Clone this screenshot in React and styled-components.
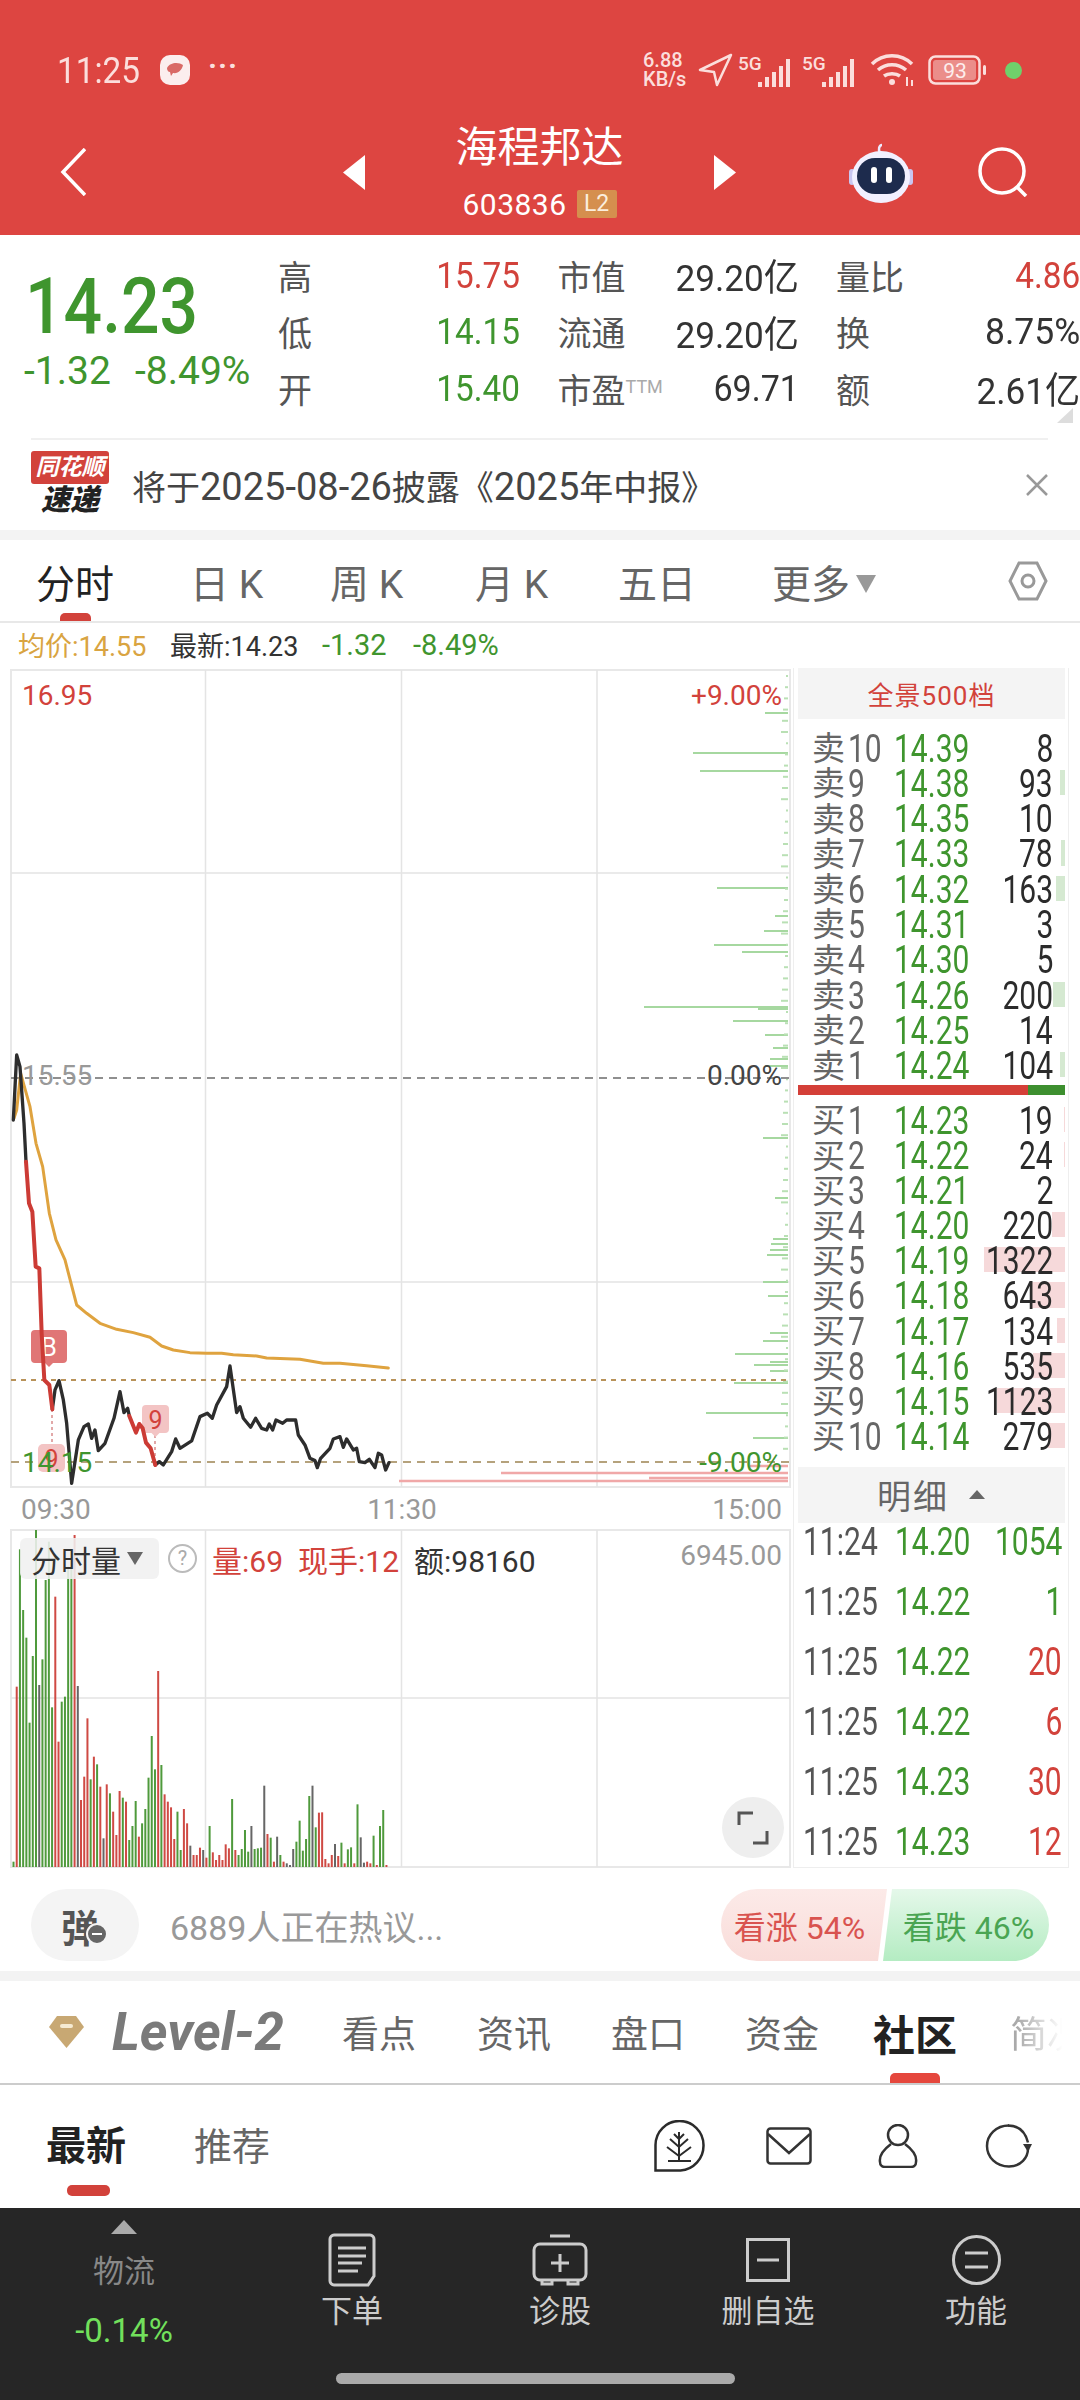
import React from 'react';
import styled, { createGlobalStyle } from 'styled-components';

const RED = '#d2423b';
const GREEN = '#3f952e';
const HEAD = '#dd4541';

const GlobalStyle = createGlobalStyle`
  html, body { margin: 0; padding: 0; background: #fff; }
  * { box-sizing: border-box; }
  body { font-family: Roboto, "Noto Sans CJK SC", sans-serif; }
`;

const Page = styled.div`
  width: 1080px;
  height: 2400px;
  overflow: hidden;
  display: flex;
  flex-direction: column;
  background: #fff;
  font-family: Roboto, "Noto Sans CJK SC", sans-serif;
`;

// digits in the app are narrower than Roboto, so squeeze them
const Num = styled.span`
  display: inline-block;
  white-space: nowrap;
  transform: scaleX(${p => p.$sx ?? 0.79});
  transform-origin: ${p => p.$origin || 'left'} center;
`;

/* ---------- header ---------- */
const Header = styled.header`
  height: 235px;
  background: ${HEAD};
  padding-top: 50px;
  color: #fff;
`;
const StatusBar = styled.div`
  height: 40px;
  display: flex;
  align-items: center;
  justify-content: space-between;
  padding: 0 58px 0 57px;
  color: #fbdedc;
`;
const StatusGroup = styled.div`
  display: flex;
  align-items: center;
`;
const Clock = styled.div`
  font-size: 37px;
  width: 103px;
`;
const AppDot = styled.div`
  width: 30px;
  height: 30px;
  border-radius: 10px;
  background: #fbeeee;
  display: flex;
  align-items: center;
  justify-content: center;
`;
const Dots = styled.div`
  margin-left: 18px;
  font-size: 30px;
  font-weight: 700;
  letter-spacing: 1px;
  line-height: 20px;
  padding-bottom: 8px;
`;
const Speed = styled.div`
  width: 47px;
  font-size: 20px;
  line-height: 19px;
  font-weight: 500;
  white-space: nowrap;
`;
const Slot = styled.div`
  margin-left: ${p => p.$ml}px;
  display: flex;
`;
const GreenDot = styled.div`
  margin-left: 18px;
  width: 17px;
  height: 17px;
  border-radius: 50%;
  background: #6fd06b;
`;
const Nav = styled.div`
  height: 114px;
  margin-top: 25px;
  display: flex;
  align-items: center;
  padding-left: 60px;
`;
const TitleBlock = styled.div`
  width: 349px;
  height: 114px;
  display: flex;
  flex-direction: column;
  align-items: center;
`;
const Title = styled.div`
  margin-top: 8px;
  font-size: 42px;
  line-height: 50px;
`;
const CodeRow = styled.div`
  margin-top: 14px;
  height: 34px;
  display: flex;
  align-items: center;
  gap: 10px;
`;
const Code = styled.span`
  font-size: 30px;
  letter-spacing: 0.5px;
`;
const Badge = styled.span`
  width: 40px;
  height: 28px;
  background: #d58f4e;
  border-radius: 2px;
  font-size: 23px;
  line-height: 28px;
  text-align: center;
  color: #fbeedd;
`;

/* ---------- quote ---------- */
const Quote = styled.section`
  position: relative;
  height: 203px;
  display: flex;
  padding-top: 12px;
`;
const PriceBlock = styled.div`
  width: 278px;
  padding-left: 24px;
`;
const BigPrice = styled.div`
  color: ${GREEN};
  font-size: 78px;
  font-weight: 500;
  line-height: 96px;
  margin-top: 12px;
  padding-left: 1px;
`;
const ChangeRow = styled.div`
  margin-top: -4px;
  display: flex;
  color: ${GREEN};
  font-size: 39px;
  line-height: 40px;
`;
const ChangeItem = styled.span`
  width: ${p => p.$w}px;
`;
const StatGrid = styled.div`
  display: grid;
  grid-template-columns: 242px 241px 244px;
  column-gap: 37.5px;
  grid-auto-rows: 56.5px;
  width: 802px;
`;
const Stat = styled.div`
  display: flex;
  align-items: center;
  justify-content: space-between;
`;
const StatLabel = styled.span`
  font-size: 34px;
  color: #555;
  white-space: nowrap;
`;
const Sup = styled.sup`
  font-size: 18px;
  color: #aaa;
  line-height: 0;
  vertical-align: 10px;
`;
const StatValue = styled.span`
  font-size: 37px;
  color: ${p => p.$c || '#333'};
  white-space: nowrap;
`;
const CornerMark = styled.div`
  position: absolute;
  right: 7px;
  bottom: 15px;
  width: 16px;
  height: 15px;
  background: #ddd;
  clip-path: polygon(100% 0, 100% 100%, 0 100%);
`;

const Notice = styled.section`
  height: 92px;
  margin: 0 32px 0 31px;
  border-top: 2px solid #f0f0f0;
  display: flex;
  align-items: center;
`;
const LogoBox = styled.div`
  width: 78px;
  height: 64px;
  display: flex;
  flex-direction: column;
  align-items: center;
  margin-top: -4px;
`;
const LogoTop = styled.div`
  width: 78px;
  height: 33px;
  border-radius: 3px;
  background: ${RED};
  color: #fff;
  font-size: 23px;
  font-weight: 700;
  font-style: italic;
  line-height: 33px;
  text-align: center;
  white-space: nowrap;
`;
const LogoBottom = styled.div`
  font-size: 29px;
  font-weight: 900;
  font-style: italic;
  line-height: 32px;
  color: #222;
`;
const NoticeText = styled.div`
  margin-left: 23px;
  flex: 1;
  font-size: 34px;
  color: #444;
  white-space: nowrap;
`;
const NoticeNum = styled.span`
  font-size: 38px;
`;
const Strip = styled.div`
  height: 10px;
  background: #f3f3f3;
`;

const ChartTabs = styled.nav`
  position: relative;
  height: 83px;
  border-bottom: 2px solid #e8e8e8;
  display: flex;
  align-items: center;
  padding-left: 36px;
`;
const ChartTab = styled.div`
  width: ${p => p.$w}px;
  font-size: 39px;
  color: ${p => (p.$active ? '#222' : '#666')};
  white-space: nowrap;
  display: flex;
  align-items: center;
  gap: 4px;
`;
const Caret = styled.span`
  width: 0;
  height: 0;
  border-left: 10px solid transparent;
  border-right: 10px solid transparent;
  border-top: 18px solid #999;
  margin-left: 2px;
  margin-top: 6px;
`;
const ActiveMark = styled.div`
  position: absolute;
  height: ${p => p.$h}px;
  width: ${p => p.$w}px;
  left: ${p => p.$x}px;
  bottom: 0;
  background: ${p => p.$c || RED};
  border-radius: 5px 5px 0 0;
`;
const HexSlot = styled.div`
  position: absolute;
  right: 32px;
  top: 21px;
`;

const Legend = styled.div`
  height: 37px;
  display: flex;
  align-items: center;
  padding: 6px 0 0 18px;
  font-size: 27px;
`;
const LegendItem = styled.span`
  width: ${p => p.$w}px;
  color: ${p => p.$c};
  font-size: ${p => p.$fs || 27}px;
  white-space: nowrap;
`;

/* ---------- market area ---------- */
const Market = styled.section`
  height: 1208px;
  display: flex;
`;
const ChartColumn = styled.div`
  position: relative;
  width: 793px;
  height: 1208px;
`;
const ChartSvg = styled.svg`
  display: block;
`;
const AxisText = styled.text`
  font-family: Roboto, sans-serif;
  font-size: 28px;
  fill: ${p => p.$c || '#999'};
  text-anchor: ${p => p.$a || 'start'};
`;
const FlagText = styled.text`
  font-family: Roboto, sans-serif;
  font-size: 25px;
  fill: ${p => p.$c};
  text-anchor: middle;
`;
const VolBar = styled.div`
  position: absolute;
  left: 20px;
  top: 878px;
  height: 41px;
  display: flex;
  align-items: center;
  font-size: 29px;
`;
const VolPick = styled.div`
  width: 139px;
  height: 41px;
  border-radius: 6px;
  background: rgba(240, 240, 240, 0.88);
  color: #333;
  display: flex;
  align-items: center;
  padding-left: 11px;
  gap: 6px;
  white-space: nowrap;
  font-size: 30px;
`;
const VolCaret = styled.span`
  width: 0;
  height: 0;
  border-left: 8px solid transparent;
  border-right: 8px solid transparent;
  border-top: 13px solid #666;
`;
const Help = styled.div`
  margin-left: 9px;
  width: 29px;
  height: 29px;
  border-radius: 50%;
  border: 2px solid #bbb;
  color: #aaa;
  font-size: 20px;
  text-align: center;
  line-height: 25px;
`;
const VolStat = styled.span`
  margin-left: ${p => p.$ml}px;
  width: ${p => p.$w}px;
  color: ${p => p.$c};
  white-space: nowrap;
  font-size: 30px;
`;
const ExpandBtn = styled.div`
  position: absolute;
  left: 722px;
  top: 1137px;
  width: 62px;
  height: 61px;
  border-radius: 50%;
  background: #eee;
  display: flex;
  align-items: center;
  justify-content: center;
`;

const Book = styled.aside`
  width: 276px;
  height: 1200px;
  margin-top: 8px;
  border: 1px solid #eee;
  border-top: none;
  padding: 0 3px 0 4px;
  display: flex;
  flex-direction: column;
`;
const BookHead = styled.div`
  height: 51px;
  flex: none;
  background: #f4f4f4;
  color: ${RED};
  font-size: 26px;
  letter-spacing: 1px;
  display: flex;
  align-items: center;
  justify-content: center;
`;
const Rows = styled.div`
  margin-top: ${p => p.$top}px;
  display: flex;
  flex-direction: column;
`;
const Row = styled.div`
  position: relative;
  height: ${p => p.$h}px;
  display: grid;
  grid-template-columns: 82px 88px 1fr;
  align-items: center;
  padding: 0 12px 0 14px;
  font-size: 38px;
  line-height: 1;
`;
const DepthFill = styled.div`
  position: absolute;
  right: 0;
  top: 5px;
  bottom: 5px;
  background: ${p => (p.$buy ? '#f6d9da' : '#d5e9d1')};
`;
const RowLabel = styled.span`
  position: relative;
  color: #666;
  display: flex;
  align-items: center;
  white-space: nowrap;
  font-size: 33px;
`;
const RowDigit = styled(Num)`
  font-size: 38px;
  margin-left: 3px;
`;
const RowPrice = styled(Num)`
  position: relative;
  color: ${GREEN};
`;
const RowQty = styled.span`
  position: relative;
  display: flex;
  justify-content: flex-end;
  min-width: 0;
  color: #2b2b2b;
`;
const Balance = styled.div`
  margin-top: 3px;
  height: 10px;
  flex: none;
  display: flex;
`;
const BalancePart = styled.div`
  width: ${p => p.$w}px;
  background: ${p => p.$c};
`;
const DetailHead = styled.div`
  margin-top: 14px;
  height: 56px;
  flex: none;
  background: #f4f4f4;
  color: #666;
  font-size: 34px;
  display: flex;
  align-items: center;
  padding-left: 79px;
  letter-spacing: 2px;
`;
const DetailCaret = styled.span`
  margin-left: 20px;
  width: 0;
  height: 0;
  border-left: 8px solid transparent;
  border-right: 8px solid transparent;
  border-bottom: 9px solid #666;
`;
const DetailList = styled.div`
  display: flex;
  flex-direction: column;
  gap: 32px;
`;
const DetailRow = styled.div`
  height: 28px;
  display: grid;
  grid-template-columns: 92px 92px 1fr;
  align-items: center;
  padding: 0 3px 0 5px;
  font-size: 38px;
  line-height: 1;
`;
const DetailTime = styled(Num)`
  color: #555;
`;
const DetailPrice = styled(Num)`
  color: ${GREEN};
`;
const DetailQty = styled.span`
  display: flex;
  justify-content: flex-end;
  min-width: 0;
  color: ${p => p.$c};
`;

/* ---------- comment row ---------- */
const CommentBar = styled.section`
  height: 103px;
  padding: 21px 31px 10px;
  display: flex;
  align-items: center;
`;
const DanmuBtn = styled.div`
  position: relative;
  width: 108px;
  height: 72px;
  border-radius: 36px;
  background: #f4f4f4;
  display: flex;
  align-items: center;
  justify-content: center;
  padding-right: 10px;
  font-size: 38px;
  font-weight: 700;
  color: #555;
`;
const DanmuOff = styled.span`
  position: absolute;
  left: 55px;
  top: 34px;
  width: 22px;
  height: 22px;
  border-radius: 50%;
  background: #666;
  border: 2px solid #f4f4f4;
  display: flex;
  align-items: center;
  justify-content: center;
  &::after {
    content: '';
    width: 10px;
    height: 2px;
    background: #fff;
  }
`;
const Hot = styled.div`
  margin-left: 31px;
  flex: 1;
  color: #999;
  font-size: 34px;
  white-space: nowrap;
`;
const VoteGroup = styled.div`
  display: flex;
`;
const Vote = styled.div`
  width: 166px;
  height: 72px;
  font-size: 32px;
  display: flex;
  align-items: center;
  justify-content: center;
  white-space: nowrap;
`;
const VoteUp = styled(Vote)`
  background: linear-gradient(#fceae8, #f9dcd9);
  color: #d9534f;
  border-radius: 36px 0 0 36px;
  clip-path: polygon(0 0, 100% 0, calc(100% - 9px) 100%, 0 100%);
  padding-right: 9px;
`;
const VoteDown = styled(Vote)`
  margin-left: -4px;
  background: linear-gradient(#e5f8ea, #b4ecc2);
  color: #4aa553;
  border-radius: 0 36px 36px 0;
  clip-path: polygon(9px 0, 100% 0, 100% 100%, 0 100%);
  padding-left: 5px;
`;

/* ---------- info tabs ---------- */
const InfoTabs = styled.nav`
  position: relative;
  height: 104px;
  border-bottom: 2px solid #ccc;
  display: flex;
  align-items: center;
  padding-left: 49px;
`;
const LevelMark = styled.div`
  width: 63px;
  display: flex;
`;
const LevelText = styled.div`
  width: 230px;
  font-size: 53px;
  font-weight: 700;
  font-style: italic;
  color: #7a7a7a;
  white-space: nowrap;
`;
const InfoTab = styled.div`
  width: ${p => p.$w}px;
  flex: none;
  font-size: ${p => (p.$active ? 42 : 37)}px;
  font-weight: ${p => (p.$active ? 700 : 400)};
  color: ${p => (p.$active ? '#222' : '#666')};
  white-space: nowrap;
`;
const FadedTab = styled(InfoTab)`
  color: #aaa;
  -webkit-mask-image: linear-gradient(90deg, #000 10%, transparent 75%);
  mask-image: linear-gradient(90deg, #000 10%, transparent 75%);
`;

const FeedBar = styled.div`
  position: relative;
  height: 123px;
  display: flex;
  padding: 0 48px 0 46px;
`;
const FeedTab = styled.div`
  margin-top: 37px;
  width: 148px;
  font-size: ${p => (p.$active ? 40 : 38)}px;
  line-height: 50px;
  font-weight: ${p => (p.$active ? 700 : 400)};
  color: ${p => (p.$active ? '#222' : '#666')};
`;
const FeedIcons = styled.div`
  margin-left: auto;
  display: flex;
  align-items: flex-start;
  padding-top: 35px;
`;
const FeedIcon = styled.div`
  margin-left: ${p => p.$ml}px;
  margin-top: ${p => p.$mt || 0}px;
  display: flex;
`;
const FeedMark = styled.div`
  position: absolute;
  left: 67px;
  bottom: 12px;
  width: 43px;
  height: 11px;
  border-radius: 5px;
  background: ${RED};
`;

/* ---------- bottom bar ---------- */
const Bottom = styled.footer`
  flex: 1;
  background: #262626;
  display: flex;
  flex-direction: column;
`;
const BottomRow = styled.div`
  height: 165px;
  display: grid;
  grid-template-columns: 248px repeat(4, 208px);
`;
const QuickCol = styled.div`
  display: flex;
  flex-direction: column;
  align-items: center;
  padding-top: 12px;
`;
const UpTri = styled.div`
  width: 0;
  height: 0;
  border-left: 13px solid transparent;
  border-right: 13px solid transparent;
  border-bottom: 14px solid #aaa;
`;
const QuickName = styled.div`
  margin-top: 18px;
  font-size: 31px;
  line-height: 40px;
  color: #888;
`;
const QuickPct = styled.div`
  margin-top: 19px;
  font-size: 33px;
  line-height: 40px;
  color: #72e05c;
`;
const ActionCol = styled.div`
  display: flex;
  flex-direction: column;
  align-items: center;
  padding-top: 24px;
`;
const ActionIcon = styled.div`
  height: 56px;
  display: flex;
  align-items: center;
`;
const ActionLabel = styled.div`
  margin-top: 4px;
  font-size: 31px;
  line-height: 40px;
  color: #ccc;
`;
const HomeBar = styled.div`
  margin-left: 336px;
  width: 399px;
  height: 11px;
  border-radius: 6px;
  background: #aaa;
`;

/* ---------- data ---------- */
const stats = [
  ['高', '15.75', RED, 0.9], ['市值', '29.20亿', null, 0.95], ['量比', '4.86', RED, 0.9],
  ['低', '14.15', GREEN, 0.9], ['流通', '29.20亿', null, 0.95], ['换', '8.75%', null, 0.96],
  ['开', '15.40', GREEN, 0.9], ['市盈', '69.71', null, 0.92], ['额', '2.61亿', null, 0.95],
];

const asks = [
  [10, '14.39', 8, 0], [9, '14.38', 93, 5], [8, '14.35', 10, 0], [7, '14.33', 78, 4], [6, '14.32', 163, 9],
  [5, '14.31', 3, 0], [4, '14.30', 5, 0], [3, '14.26', 200, 12], [2, '14.25', 14, 0], [1, '14.24', 104, 5],
];
const bids = [
  [1, '14.23', 19, 1], [2, '14.22', 24, 1], [3, '14.21', 2, 0], [4, '14.20', 220, 13], [5, '14.19', 1322, 81],
  [6, '14.18', 643, 33], [7, '14.17', 134, 8], [8, '14.16', 535, 32], [9, '14.15', 1123, 68], [10, '14.14', 279, 17],
];
const details = [
  ['11:24', '14.20', 1054, GREEN], ['11:25', '14.22', 1, GREEN], ['11:25', '14.22', 20, RED],
  ['11:25', '14.22', 6, RED], ['11:25', '14.23', 30, RED], ['11:25', '14.23', 12, RED],
];

// [y, x of left end] of the horizontal volume-by-price bars
const priceBars = [
  [713, 765], [753, 693], [771, 700], [888, 717], [916, 775], [931, 764], [945, 714], [952, 742],
  [1007, 644], [1009, 758], [1021, 733], [1035, 765], [1048, 773], [1059, 770], [1066, 765], [1138, 763],
  [1198, 775], [1239, 773], [1244, 771], [1250, 770], [1255, 767], [1282, 763], [1296, 768], [1333, 770],
  [1341, 763], [1354, 735], [1362, 770], [1365, 754], [1371, 770], [1383, 734], [1413, 706], [1438, 753],
];
const tickYs = Array.from({ length: 70 }, (_, i) => 676 + i * 11.2);

// points sampled from the chart at 3x, offset (0,1040)
const blackA = '40,240 50,45 60,80 72,250 78,365';
const redA = '78,365 87,490 97,515 107,680 118,685 125,880 133,1020 148,1035 157,1108';
const blackB = '157,1108 165,1050 177,1022 190,1080 200,1150 215,1330 235,1200 252,1160 265,1152 275,1195 285,1170 295,1232 315,1210 342,1135 360,1055 372,1118 383,1105 388,1128';
const redB = '388,1128 408,1178 418,1152 428,1165 438,1208 452,1225 466,1275';
const blackC = '466,1275 478,1265 490,1275 515,1235 527,1197 540,1225 575,1203 600,1130 622,1120 637,1135 650,1095 680,1040 690,978 710,1118 720,1100 730,1135 752,1162 767,1135 785,1165 800,1170 808,1152 818,1170 828,1140 848,1150 860,1140 887,1140 895,1185 915,1215 930,1255 945,1262 952,1283 962,1255 990,1225 1000,1197 1020,1190 1030,1222 1040,1197 1060,1230 1070,1225 1078,1265 1095,1268 1108,1258 1125,1283 1135,1240 1145,1245 1157,1290 1167,1268';
const avg = '42,235 50,210 62,100 90,200 108,310 128,380 148,520 168,600 195,660 230,795 260,820 300,850 350,868 400,878 450,892 485,918 520,930 570,938 620,940 665,940 700,944 770,948 800,954 900,958 970,970 1020,970 1100,977 1165,984';

// colour + top of each volume bar, read from a crop scaled 1.96 wide and 3 high
const vol = 'g1085 r560 g148 g330 g413 g668 g468 g90 k555 g478 g240 g125 g622 r290 r725 g605 g590 g200 g200 r105 k558 r900 r830 r655 g838 r770 g793 r860 k1015 r853 g880 r935 r1005 r873 g893 r905 g1020 g978 g903 r1010 g970 g927 g833 g708 g808 r513 g795 r883 r905 r922 r1017 g935 g1050 r927 r970 k1037 r1065 r1065 r1043 k1050 r1073 g978 r1057 r1080 r1065 r1080 r1033 r1045 g897 r1050 g1065 g1047 g990 g1055 k978 g1047 g1045 g1043 k857 r1002 g1013 r1085 k1010 g1065 r1085 k1090 k1095 k1047 g1025 g962 g1052 g1017 g888 k857 g982 r938 r937 r1077 r1090 r1065 k1032 r1068 g1028 r1090 g1048 g1042 r1090 g913 k1012 k1088 r1085 r1090 g1007 r1095 g978 g930 r1095'.split(' ');
const volColor = { g: '#4f9a3c', r: '#cf4a44', k: '#666' };

/* ---------- icons ---------- */
const Chevron = () => (
  <svg width="26" height="48" viewBox="0 0 26 48" fill="none" stroke="#fff" strokeWidth="3.5"><path d="M25 1 3 24l22 23" /></svg>
);
const Tri = ({ right }) => (
  <svg width="22" height="35" viewBox="0 0 22 35" fill="#fff"><path d={right ? 'M0 0 22 17.5 0 35z' : 'M22 0 0 17.5 22 35z'} /></svg>
);
const Robot = () => (
  <svg width="64" height="62" viewBox="0 0 64 62">
    <path d="M31 12c-2-3-1-8 2-8" fill="none" stroke="#eceaff" strokeWidth="2.5" />
    <rect x="0" y="28" width="6" height="16" rx="3" fill="#c9c6f0" />
    <rect x="58" y="28" width="6" height="16" rx="3" fill="#c9c6f0" />
    <ellipse cx="32" cy="36" rx="29" ry="26" fill="#f2f0ff" />
    <rect x="8" y="17" width="48" height="36" rx="18" fill="#1d2b4d" />
    <rect x="22" y="26" width="6" height="16" rx="3" fill="#fff" />
    <rect x="37" y="26" width="6" height="16" rx="3" fill="#fff" />
  </svg>
);
const Search = () => (
  <svg width="52" height="50" viewBox="0 0 52 50" fill="none" stroke="#fff" strokeWidth="3.5">
    <circle cx="25" cy="24" r="22" /><path d="m40 40 9 9" />
  </svg>
);
const Arrow = () => (
  <svg width="35" height="34" viewBox="0 0 35 34" fill="none" stroke="#fbdedc" strokeWidth="2.5" strokeLinejoin="round"><path d="M33 2 2 17l14 2 3 13z" /></svg>
);
const Signal = () => (
  <svg width="57" height="36" viewBox="0 0 57 36">
    <text x="0" y="18" fontFamily="Roboto, sans-serif" fontSize="19" fontWeight="500" fill="#fbdedc">5G</text>
    {[[20, 30, 5], [27, 25, 10], [34, 20, 15], [41, 14, 21], [48, 7, 28]].map(([x, y, h]) => (
      <rect key={x} x={x} y={y} width="4" height={h} fill="#fbdedc" />
    ))}
  </svg>
);
const Wifi = () => (
  <svg width="45" height="34" viewBox="0 0 45 34" fill="none" stroke="#fbdedc" strokeWidth="3.5">
    <path d="M2 11c11-11 29-11 40 0M8 17c8-7 20-7 28 0M14 23c4-3 12-3 16 0" />
    <circle cx="22" cy="29" r="3" fill="#fbdedc" stroke="none" />
    <path d="M37 24v9M42 27v6" strokeWidth="2" />
  </svg>
);
const Battery = () => (
  <svg width="59" height="30" viewBox="0 0 59 30">
    <rect x="1.5" y="1.5" width="50" height="27" rx="6" fill="none" stroke="#fbdedc" strokeWidth="2.5" />
    <rect x="5" y="5" width="43" height="20" rx="3" fill="#eb8e8a" />
    <rect x="55" y="10" width="3" height="10" rx="1.5" fill="#fbdedc" />
    <text x="27" y="23" textAnchor="middle" fontFamily="Roboto, sans-serif" fontSize="21" fill="#fdeeee">93</text>
  </svg>
);
const Fish = () => (
  <svg width="20" height="20" viewBox="0 0 20 20" fill="#d96a66">
    <path d="M2 8c3-6 12-6 16-3-1 5-5 9-10 8l-2 3-1-4C3 12 2 10 2 8z" />
  </svg>
);
const Hex = () => (
  <svg width="40" height="40" viewBox="0 0 40 40" fill="none" stroke="#999" strokeWidth="3">
    <path d="M11 2h18l9 18-9 18H11L2 20z" /><circle cx="20" cy="20" r="6" />
  </svg>
);
const Close = () => (
  <svg width="22" height="22" viewBox="0 0 22 22" stroke="#999" strokeWidth="2.5"><path d="m1 1 20 20M21 1 1 21" /></svg>
);
const Expand = () => (
  <svg width="32" height="34" viewBox="0 0 32 34" fill="none" stroke="#555" strokeWidth="3"><path d="M2 14V2h14M30 20v12H16" /></svg>
);
const Diamond = () => (
  <svg width="35" height="32" viewBox="0 0 35 32">
    <path d="M8 0h19l8 11-17.500 21L0 11z" fill="#c8a873" />
    <rect x="11" y="8" width="13" height="4" rx="2" fill="#f5ead2" />
  </svg>
);
const TalkIcon = () => (
  <svg width="51" height="52" viewBox="0 0 51 52" fill="none" stroke="#2b2b2b" strokeWidth="2.5">
    <path d="M1.500 50.500V25a24 24 0 0 1 48 0 25 25 0 0 1-23 25.500z" />
    <path d="M25 12v29M14 41h23M16 19l9 8 9-8M13 27l12 9 12-9M20 14l5 5 5-5" strokeWidth="2" />
  </svg>
);
const MailIcon = () => (
  <svg width="46" height="38" viewBox="0 0 46 38" fill="none" stroke="#333" strokeWidth="2.500">
    <rect x="1.500" y="1.500" width="43" height="35" rx="3" /><path d="m2 7 21 19L44 7" />
  </svg>
);
const UserIcon = () => (
  <svg width="40" height="44" viewBox="0 0 40 44" fill="none" stroke="#333" strokeWidth="2.500">
    <ellipse cx="20" cy="11" rx="10" ry="10" /><path d="M13 20C5 26 1 32 2 38c0 3 2 5 5 5h26c3 0 5-2 5-5 1-6-3-12-11-18" />
  </svg>
);
const RefreshIcon = () => (
  <svg width="47" height="44" viewBox="0 0 47 44" fill="none" stroke="#333" strokeWidth="2.500">
    <path d="M24 1.500C11 1.500 2 11 2 22s9 20.500 22 20.500c12 0 19-9 19-18" />
    <path d="M23 1.500c9 0 17 5 20 17" /><path d="m38 20 5 8 4-8z" fill="#333" stroke="none" />
  </svg>
);
const OrderIcon = () => (
  <svg width="48" height="54" viewBox="0 0 48 54" fill="none" stroke="#ccc" strokeWidth="3">
    <path d="M6 2h36c2 0 4 2 4 4v37l-6 9H6c-2 0-4-2-4-4V6c0-2 2-4 4-4z" />
    <path d="M10 15h28M10 23h28M10 30h24M10 38h20" />
  </svg>
);
const DiagnoseIcon = () => (
  <svg width="56" height="52" viewBox="0 0 56 52" fill="none" stroke="#ccc" strokeWidth="3">
    <path d="M18 2h20" /><rect x="2" y="10" width="52" height="36" rx="6" />
    <path d="M28 20v18M19 29h18M10 47v3h10v-3M36 47v3h10v-3" />
  </svg>
);
const MinusBoxIcon = () => (
  <svg width="44" height="44" viewBox="0 0 44 44" fill="none" stroke="#ccc" strokeWidth="3">
    <rect x="1.500" y="1.500" width="41" height="41" /><path d="M11 22h22" />
  </svg>
);
const MenuIcon = () => (
  <svg width="49" height="50" viewBox="0 0 49 50" fill="none" stroke="#ccc" strokeWidth="3">
    <ellipse cx="24.500" cy="25" rx="23" ry="23.500" /><path d="M13 18h23M13 32h23" />
  </svg>
);

const Flag = ({ x, y, w, h, fill }) => (
  <path
    d={`M${x + 4} ${y}h${w - 8}a4 4 0 0 1 4 4v${h - 8}a4 4 0 0 1-4 4h${-(w / 2 - 8)}l-4 4-4-4h${-(w / 2 - 8)}a4 4 0 0 1-4-4v${-(h - 8)}a4 4 0 0 1 4-4z`}
    fill={fill}
  />
);

const Charts = () => (
  <ChartSvg width="793" height="1208" viewBox="0 660 793 1208">
    {/* price frame */}
    <rect x="11" y="670" width="779" height="817" fill="none" stroke="#e8e8e8" strokeWidth="2" />
    <path d="M11 873h779M11 1282h779M205.500 670v817M401.500 670v817M597 670v817" stroke="#e4e4e4" strokeWidth="1.500" />
    {/* volume frame */}
    <rect x="11" y="1530" width="779" height="337" fill="none" stroke="#e8e8e8" strokeWidth="2" />
    <path d="M11 1698h779M205.500 1530v337M401.500 1530v337M597 1530v337" stroke="#e4e4e4" strokeWidth="1.500" />

    {priceBars.map(([y, x]) => (
      <path key={y} d={`M${x} ${y}H788`} stroke="#a6d8a0" strokeWidth="2" />
    ))}
    {tickYs.map((y, i) => (
      <path key={y} d={`M${786 - (i * 7) % 6} ${y}H788`} stroke="#b9e0b4" strokeWidth="2" />
    ))}
    <path d="M501 1473H788M399 1481H788M649 1478H788M750 1466H788" stroke="#f0a8a8" strokeWidth="2.500" />

    <path d="M11 1078H790" stroke="#8f8f8f" strokeWidth="2" strokeDasharray="8 6" />
    <path d="M11 1380H790" stroke="#b8925a" strokeWidth="2" strokeDasharray="5 5" />
    <path d="M11 1462H790" stroke="#b5a27c" strokeWidth="2" strokeDasharray="8 6" />

    <Flag x={31} y={1330} w={36} h={33} fill="#e07676" />
    <FlagText x="49" y="1356" $c="#fff">B</FlagText>
    <path d="M52 1409V1442M155 1435V1462" stroke="#d98c8c" strokeWidth="1.500" strokeDasharray="3 3" />
    <Flag x={142} y={1405} w={27} h={28} fill="#f3c4c4" />
    <FlagText x="155.500" y="1429" $c={RED}>9</FlagText>
    <rect x="38" y="1444" width="27" height="28" rx="5" fill="#f3c4c4" />
    <FlagText x="51.500" y="1468" $c={RED}>9</FlagText>

    <g transform="translate(0 1040) scale(0.3333)" fill="none" strokeLinejoin="round" strokeLinecap="round">
      <polyline points={avg} stroke="#dfa33f" strokeWidth="9" />
      <polyline points={blackA} stroke="#2d2d2d" strokeWidth="10" />
      <polyline points={blackB} stroke="#2d2d2d" strokeWidth="10" />
      <polyline points={blackC} stroke="#2d2d2d" strokeWidth="10" />
      <polyline points={redA} stroke="#cc3b35" strokeWidth="12" />
      <polyline points={redB} stroke="#cc3b35" strokeWidth="12" />
    </g>

    <AxisText x="22" y="705" $c={RED}>16.95</AxisText>
    <AxisText x="782" y="705" $c={RED} $a="end">+9.00%</AxisText>
    <AxisText x="22" y="1085">15.55</AxisText>
    <AxisText x="782" y="1085" $c="#444" $a="end">0.00%</AxisText>
    <AxisText x="22" y="1472" $c={GREEN}>14.15</AxisText>
    <AxisText x="782" y="1472" $c={GREEN} $a="end">-9.00%</AxisText>
    <AxisText x="21" y="1519">09:30</AxisText>
    <AxisText x="402" y="1519" $a="middle">11:30</AxisText>
    <AxisText x="782" y="1519" $a="end">15:00</AxisText>

    {vol.map((v, i) => {
      const top = 1500 + Number(v.slice(1)) / 3;
      return <rect key={i} x={12.500 + i * 3.215} y={top} width="2" height={1867 - top} fill={volColor[v[0]]} />;
    })}
    <AxisText x="782" y="1565" $a="end">6945.00</AxisText>
  </ChartSvg>
);

const DepthRow = ({ side, buy, h, level, price, qty, fill }) => (
  <Row $h={h}>
    {fill > 0 && <DepthFill $buy={buy} style={{ width: fill }} />}
    <RowLabel>{side}<RowDigit>{level}</RowDigit></RowLabel>
    <RowPrice>{price}</RowPrice>
    <RowQty><Num $origin="right">{qty}</Num></RowQty>
  </Row>
);

export default function App() {
  return (
    <Page>
      <GlobalStyle />
      <Header>
        <StatusBar>
          <StatusGroup>
            <Clock><Num $sx={0.9}>11:25</Num></Clock>
            <AppDot><Fish /></AppDot>
            <Dots>···</Dots>
          </StatusGroup>
          <StatusGroup>
            <Speed><div>6.88</div><div>KB/s</div></Speed>
            <Slot $ml={8}><Arrow /></Slot>
            <Slot $ml={5}><Signal /></Slot>
            <Slot $ml={7}><Signal /></Slot>
            <Slot $ml={11}><Wifi /></Slot>
            <Slot $ml={13}><Battery /></Slot>
            <GreenDot />
          </StatusGroup>
        </StatusBar>
        <Nav>
          <Chevron />
          <Slot $ml={257}><Tri /></Slot>
          <TitleBlock>
            <Title>海程邦达</Title>
            <CodeRow>
              <Code>603836</Code>
              <Badge>L2</Badge>
            </CodeRow>
          </TitleBlock>
          <Tri right />
          <Slot $ml={113}><Robot /></Slot>
          <Slot $ml={64}><Search /></Slot>
        </Nav>
      </Header>

      <Quote>
        <PriceBlock>
          <BigPrice><Num $sx={0.87}>14.23</Num></BigPrice>
          <ChangeRow>
            <ChangeItem $w={111}>-1.32</ChangeItem>
            <ChangeItem $w={125}>-8.49%</ChangeItem>
          </ChangeRow>
        </PriceBlock>
        <StatGrid>
          {stats.map(([label, value, c, sx]) => (
            <Stat key={label}>
              <StatLabel>{label}{label === '市盈' && <Sup>TTM</Sup>}</StatLabel>
              <StatValue $c={c}><Num $sx={sx} $origin="right">{value}</Num></StatValue>
            </Stat>
          ))}
        </StatGrid>
        <CornerMark />
      </Quote>

      <Notice>
        <LogoBox>
          <LogoTop>同花顺</LogoTop>
          <LogoBottom>速递</LogoBottom>
        </LogoBox>
        <NoticeText>将于<NoticeNum>2025-08-26</NoticeNum>披露《<NoticeNum>2025</NoticeNum>年中报》</NoticeText>
        <Close />
      </Notice>
      <Strip />

      <ChartTabs>
        <ChartTab $w={154} $active>分时</ChartTab>
        <ChartTab $w={140}>日 K</ChartTab>
        <ChartTab $w={145}>周 K</ChartTab>
        <ChartTab $w={143}>月 K</ChartTab>
        <ChartTab $w={154}>五日</ChartTab>
        <ChartTab $w={130}>更多<Caret /></ChartTab>
        <HexSlot><Hex /></HexSlot>
        <ActiveMark $x={60} $w={31} $h={8} />
      </ChartTabs>
      <Legend>
        <LegendItem $w={152} $c="#d9a441">均价:14.55</LegendItem>
        <LegendItem $w={152} $c="#333">最新:14.23</LegendItem>
        <LegendItem $w={91} $c={GREEN} $fs={29}>-1.32</LegendItem>
        <LegendItem $w={100} $c={GREEN} $fs={29}>-8.49%</LegendItem>
      </Legend>

      <Market>
        <ChartColumn>
          <Charts />
          <VolBar>
            <VolPick>分时量<VolCaret /></VolPick>
            <Help>?</Help>
            <VolStat $ml={15} $w={86} $c={RED}>量:69</VolStat>
            <VolStat $ml={0} $w={116} $c={RED}>现手:12</VolStat>
            <VolStat $ml={0} $w={120} $c="#333">额:98160</VolStat>
          </VolBar>
          <ExpandBtn><Expand /></ExpandBtn>
        </ChartColumn>
        <Book>
          <BookHead>全景500档</BookHead>
          <Rows $top={10.5}>
            {asks.map(([level, price, qty, fill]) => (
              <DepthRow key={level} side="卖" h={35.3} level={level} price={price} qty={qty} fill={fill} />
            ))}
          </Rows>
          <Balance>
            <BalancePart $w={230} $c="#d43f38" />
            <BalancePart $w={37} $c="#3d8f2f" />
          </Balance>
          <Rows $top={6.5}>
            {bids.map(([level, price, qty, fill]) => (
              <DepthRow key={level} side="买" buy h={35.1} level={level} price={price} qty={qty} fill={fill} />
            ))}
          </Rows>
          <DetailHead>明细<DetailCaret /></DetailHead>
          <DetailList>
            {details.map(([time, price, qty, c], i) => (
              <DetailRow key={i}>
                <DetailTime>{time}</DetailTime>
                <DetailPrice>{price}</DetailPrice>
                <DetailQty $c={c}><Num $origin="right">{qty}</Num></DetailQty>
              </DetailRow>
            ))}
          </DetailList>
        </Book>
      </Market>

      <CommentBar>
        <DanmuBtn>弹<DanmuOff /></DanmuBtn>
        <Hot>6889人正在热议...</Hot>
        <VoteGroup>
          <VoteUp>看涨 54%</VoteUp>
          <VoteDown>看跌 46%</VoteDown>
        </VoteGroup>
      </CommentBar>
      <Strip />

      <InfoTabs>
        <LevelMark><Diamond /></LevelMark>
        <LevelText>Level-2</LevelText>
        <InfoTab $w={135}>看点</InfoTab>
        <InfoTab $w={134}>资讯</InfoTab>
        <InfoTab $w={134}>盘口</InfoTab>
        <InfoTab $w={128}>资金</InfoTab>
        <InfoTab $w={137} $active>社区</InfoTab>
        <FadedTab $w={70}>简况</FadedTab>
        <ActiveMark $x={890} $w={50} $h={10} $c="#e5473d" />
      </InfoTabs>

      <FeedBar>
        <FeedTab $active>最新</FeedTab>
        <FeedTab>推荐</FeedTab>
        <FeedIcons>
          <FeedIcon $ml={0}><TalkIcon /></FeedIcon>
          <FeedIcon $ml={61} $mt={7}><MailIcon /></FeedIcon>
          <FeedIcon $ml={66} $mt={4}><UserIcon /></FeedIcon>
          <FeedIcon $ml={67} $mt={4}><RefreshIcon /></FeedIcon>
        </FeedIcons>
        <FeedMark />
      </FeedBar>

      <Bottom>
        <BottomRow>
          <QuickCol>
            <UpTri />
            <QuickName>物流</QuickName>
            <QuickPct>-0.14%</QuickPct>
          </QuickCol>
          <ActionCol><ActionIcon><OrderIcon /></ActionIcon><ActionLabel>下单</ActionLabel></ActionCol>
          <ActionCol><ActionIcon><DiagnoseIcon /></ActionIcon><ActionLabel>诊股</ActionLabel></ActionCol>
          <ActionCol><ActionIcon><MinusBoxIcon /></ActionIcon><ActionLabel>删自选</ActionLabel></ActionCol>
          <ActionCol><ActionIcon><MenuIcon /></ActionIcon><ActionLabel>功能</ActionLabel></ActionCol>
        </BottomRow>
        <HomeBar />
      </Bottom>
    </Page>
  );
}
